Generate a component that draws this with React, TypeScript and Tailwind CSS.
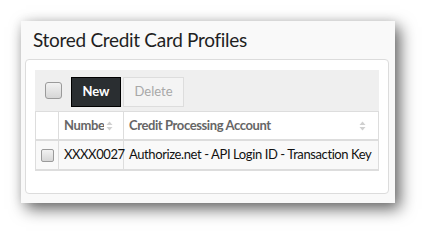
function SortIcon() {
  return (
    <span className="ml-[2px] inline-flex shrink-0 text-[#d0d0d0]">
      <svg width="7" height="10" viewBox="0 0 7 10">
        <path d="M3.5 0.5 L6.5 4 L0.5 4 Z" fill="currentColor" />
        <path d="M3.5 9.5 L6.5 6 L0.5 6 Z" fill="currentColor" />
      </svg>
    </span>
  );
}

function Check({ size }: { size: 'lg' | 'sm' }) {
  const cls =
    size === 'lg'
      ? 'h-[17px] w-[17px] rounded-[3px]'
      : 'h-[13px] w-[13px] rounded-[2px]';
  return (
    <span
      className={`block shrink-0 border border-[#9a9a9a] bg-gradient-to-b from-[#f2f2f2] to-[#d6d6d6] ${cls}`}
    />
  );
}

export default function App() {
  return (
    <div className="h-[245px] w-[437px] bg-white pl-[21px] pt-[21px] font-['Lato','Noto_Sans',sans-serif]">
      <div className="flex h-[182px] w-[374px] flex-col bg-[#f9f9f9] shadow-[5px_6px_15px_rgba(0,0,0,0.6),0_0_10px_rgba(0,0,0,0.08)]">
        <div className="flex h-[38px] items-center pl-[12px] pt-[1px] text-[19px] tracking-[-0.3px] text-[#1f1f1f]">
          Stored Credit Card Profiles
        </div>
        <div className="ml-[4px] h-[135px] w-[364px] rounded-[4px] border border-[#dcdcdc] bg-white px-[9px] pt-[10px]">
          <div className="flex h-[41px] items-center gap-[9px] bg-[#efefef] pl-[10px]">
            <Check size="lg" />
            <div className="flex gap-[2px] pt-[2px]">
              <button className="h-[30px] w-[50px] border border-black bg-[#2a2e31] text-[13px] font-bold text-white">
                New
              </button>
              <button className="h-[30px] w-[61px] border border-[#dddddd] bg-[#f4f4f4] text-[13px] text-[#a8a8a8]">
                Delete
              </button>
            </div>
          </div>
          <div className="border-x border-[#dddddd] text-[13px] tracking-[-0.4px]">
            <div className="flex h-[30px] border-b-2 border-t border-[#dddddd] bg-white font-bold text-[#666]">
              <div className="w-[23px] shrink-0 border-r border-[#dddddd]" />
              <div className="flex w-[65px] shrink-0 items-center border-r border-[#dddddd] pl-[5px]">
                <span className="w-[40px] overflow-hidden whitespace-nowrap">Number</span>
                <SortIcon />
              </div>
              <div className="flex min-w-0 flex-1 items-center justify-between pl-[5px] pr-[12px]">
                <span>Credit Processing Account</span>
                <SortIcon />
              </div>
            </div>
            <div className="flex h-[30px] border-b-2 border-[#dddddd] bg-[#f9f9f9] text-[#111]">
              <div className="flex w-[23px] shrink-0 items-center justify-center border-r border-[#dddddd] pl-[1px]">
                <Check size="sm" />
              </div>
              <div className="flex w-[65px] shrink-0 items-center border-r border-[#dddddd] pl-[5px]">
                XXXX0027
              </div>
              <div className="flex min-w-0 flex-1 items-center whitespace-nowrap pl-[5px]">
                Authorize.net - API Login ID - Transaction Key
              </div>
            </div>
          </div>
        </div>
      </div>
    </div>
  );
}
